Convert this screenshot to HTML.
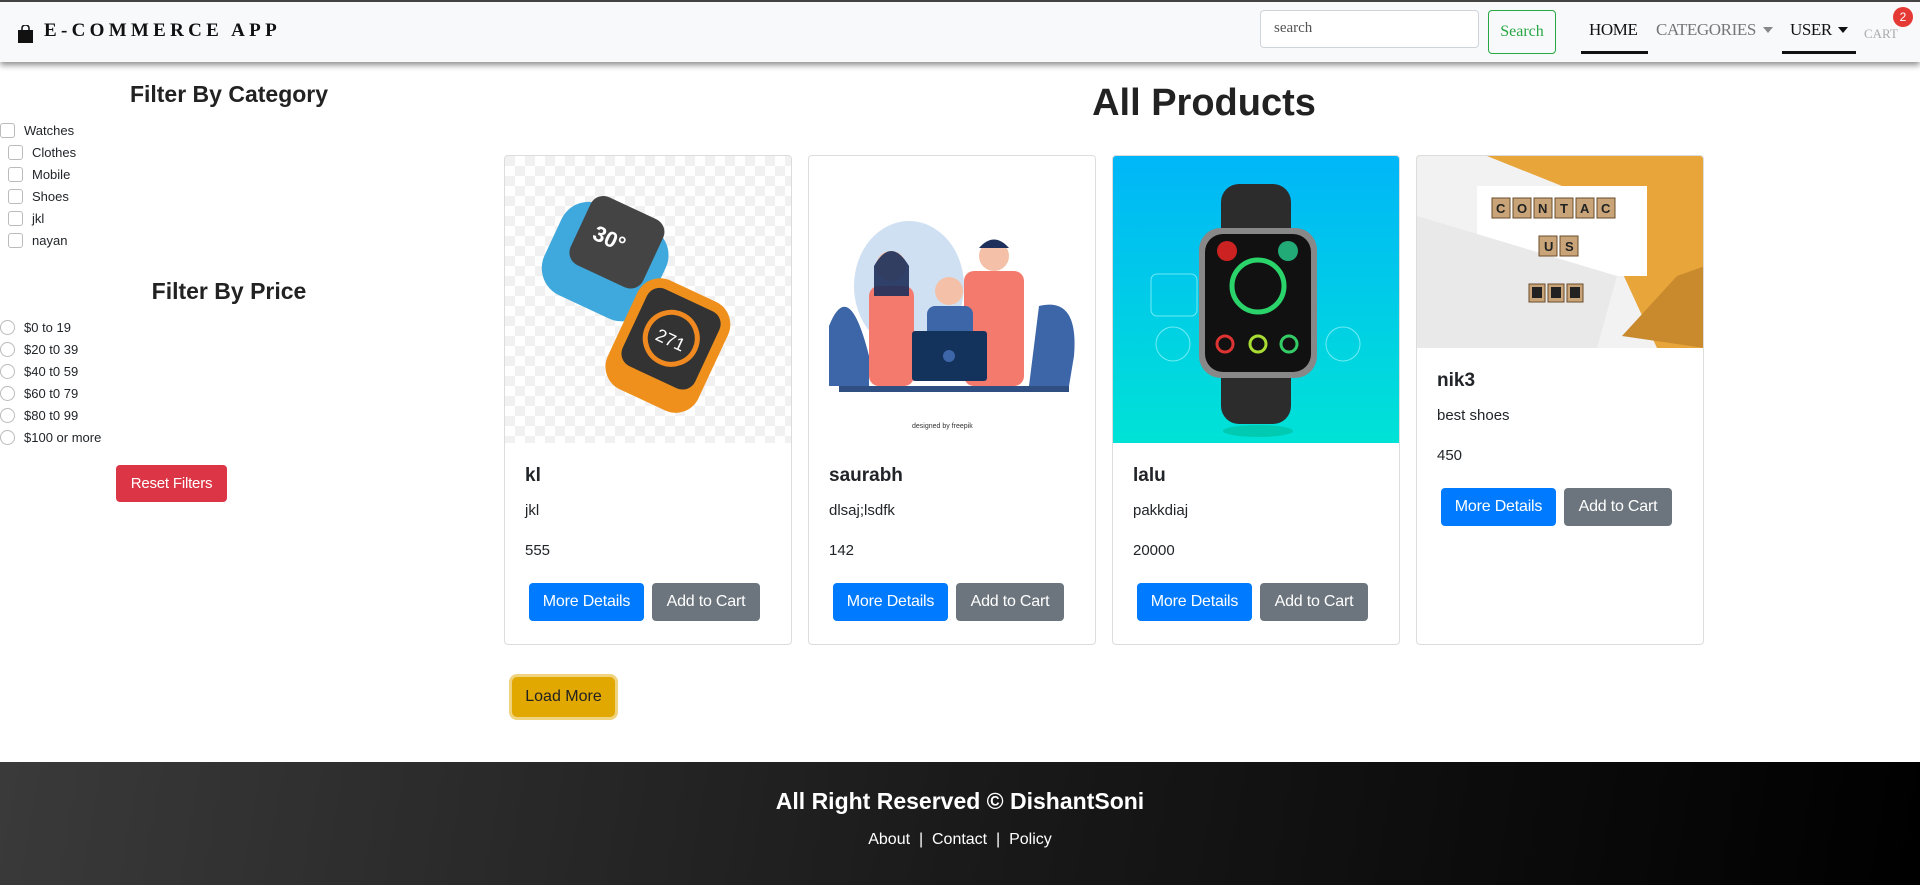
<!DOCTYPE html>
<html><head><meta charset="utf-8"><style>
*{box-sizing:border-box;margin:0;padding:0}
body{width:1920px;height:885px;position:relative;overflow:hidden;background:#fff;font-family:"Liberation Sans",sans-serif;color:#212529}
.a{position:absolute;white-space:nowrap}
.nav{left:0;top:0;width:1920px;height:62px;background:#f8f9fa;border-top:2px solid #444;box-shadow:0 3px 6px rgba(0,0,0,.45)}
.cb{width:15px;height:15px;border:1px solid #bbb;border-radius:3px;background:#fff}
.rb{width:15px;height:15px;border:1px solid #bbb;border-radius:50%;background:#fff}
.lbl{font-size:13px;color:#212529}
.card{border:1px solid #dcdcdc;border-radius:4px;width:288px;overflow:hidden;background:#fff}
.btn{position:absolute;height:38px;border-radius:4px;color:#fff;font-size:16px;letter-spacing:-0.2px;line-height:38px;text-align:center}
.blue{background:#007bff}.gray{background:#6c757d}
.t{font-size:19px;font-weight:bold}
.d{font-size:15px}
.nv{font-family:'Liberation Serif',serif;font-size:17px;letter-spacing:-0.4px}
</style></head><body>
<div class="a nav"></div>
<svg class="a" style="left:18px;top:25px" width="15" height="18" viewBox="0 0 15 18"><rect x="0" y="5" width="15" height="13" fill="#111"/><path d="M4 6V3a3.5 3 0 0 1 7 0v3" stroke="#111" stroke-width="1.5" fill="none"/></svg>
<div class="a" style="left:44px;top:20px;font-family:'Liberation Serif',serif;font-weight:bold;font-size:19px;letter-spacing:4.3px;color:#111">E-COMMERCE APP</div>
<div class="a" style="left:1260px;top:10px;width:219px;height:38px;border:1px solid #ced4da;border-radius:4px;background:#fff;font-family:'Liberation Serif',serif;font-size:15px;color:#555;padding:9px 13px">search</div>
<div class="a" style="left:1488px;top:10px;width:68px;height:44px;border:1px solid #28a745;border-radius:4px;font-family:'Liberation Serif',serif;font-size:16px;color:#28a745;line-height:42px;text-align:center">Search</div>
<div class="a nv" style="left:1589px;top:20px;color:#111">HOME</div>
<div class="a" style="left:1581px;top:51px;width:67px;height:3px;background:#111"></div>
<div class="a nv" style="left:1656px;top:20px;color:#777">CATEGORIES</div>
<div class="a" style="left:1763px;top:27px;width:0;height:0;border-left:5px solid transparent;border-right:5px solid transparent;border-top:6px solid #888"></div>
<div class="a nv" style="left:1790px;top:20px;color:#111">USER</div>
<div class="a" style="left:1838px;top:27px;width:0;height:0;border-left:5px solid transparent;border-right:5px solid transparent;border-top:6px solid #111"></div>
<div class="a" style="left:1782px;top:51px;width:74px;height:3px;background:#111"></div>
<div class="a" style="left:1864px;top:26px;font-family:'Liberation Serif',serif;font-size:13px;color:#aaa">CART</div>
<div class="a" style="left:1893px;top:7px;width:20px;height:20px;border-radius:50%;background:#e53935;color:#fff;font-size:12px;text-align:center;line-height:20px">2</div>

<div class="a" style="left:79px;top:81px;width:300px;text-align:center;font-size:23px;font-weight:bold;color:#222">Filter By Category</div>
<div class="a cb" style="left:0;top:123px"></div><div class="a lbl" style="left:24px;top:123px">Watches</div>
<div class="a cb" style="left:8px;top:145px"></div><div class="a lbl" style="left:32px;top:145px">Clothes</div>
<div class="a cb" style="left:8px;top:167px"></div><div class="a lbl" style="left:32px;top:167px">Mobile</div>
<div class="a cb" style="left:8px;top:189px"></div><div class="a lbl" style="left:32px;top:189px">Shoes</div>
<div class="a cb" style="left:8px;top:211px"></div><div class="a lbl" style="left:32px;top:211px">jkl</div>
<div class="a cb" style="left:8px;top:233px"></div><div class="a lbl" style="left:32px;top:233px">nayan</div>
<div class="a" style="left:79px;top:278px;width:300px;text-align:center;font-size:23px;font-weight:bold;color:#222">Filter By Price</div>
<div class="a rb" style="left:0;top:320px"></div><div class="a lbl" style="left:24px;top:320px">$0 to 19</div>
<div class="a rb" style="left:0;top:342px"></div><div class="a lbl" style="left:24px;top:342px">$20 t0 39</div>
<div class="a rb" style="left:0;top:364px"></div><div class="a lbl" style="left:24px;top:364px">$40 t0 59</div>
<div class="a rb" style="left:0;top:386px"></div><div class="a lbl" style="left:24px;top:386px">$60 t0 79</div>
<div class="a rb" style="left:0;top:408px"></div><div class="a lbl" style="left:24px;top:408px">$80 t0 99</div>
<div class="a rb" style="left:0;top:430px"></div><div class="a lbl" style="left:24px;top:430px">$100 or more</div>
<div class="btn a" style="left:116px;top:465px;width:111px;height:37px;line-height:37px;background:#dc3545;font-size:15px">Reset Filters</div>

<div class="a" style="left:904px;top:82px;width:600px;text-align:center;font-size:38px;font-weight:bold;color:#222">All Products</div>

<!-- card 1 -->
<div class="a card" style="left:504px;top:155px;height:490px">
<svg width="288" height="287" viewBox="0 0 288 287"><defs><pattern id="ck" width="20" height="20" patternUnits="userSpaceOnUse"><rect width="20" height="20" fill="#fff"/><rect width="10" height="10" fill="#f1f1f1"/><rect x="10" y="10" width="10" height="10" fill="#f1f1f1"/></pattern></defs><rect width="288" height="287" fill="url(#ck)"/>
<g transform="rotate(25 100 100)"><rect x="45" y="55" width="115" height="100" rx="30" fill="#3fa8dc"/><rect x="65" y="45" width="80" height="75" rx="14" fill="#444"/><text x="80" y="90" fill="#fff" font-size="22" font-weight="bold" font-family="Liberation Sans">30°</text></g>
<g transform="rotate(25 165 185)"><rect x="115" y="130" width="100" height="120" rx="25" fill="#f0901c"/><rect x="125" y="140" width="80" height="85" rx="14" fill="#333"/><circle cx="165" cy="182" r="26" fill="none" stroke="#f08a20" stroke-width="5"/><text x="150" y="190" fill="#fff" font-size="18" font-family="Liberation Sans">271</text></g></svg>
<div class="a t" style="left:20px;top:309px">kl</div>
<div class="a d" style="left:20px;top:346px">jkl</div>
<div class="a d" style="left:20px;top:386px">555</div>
<div class="btn blue" style="left:24px;top:427px;width:115px">More Details</div>
<div class="btn gray" style="left:147px;top:427px;width:108px">Add to Cart</div>
</div>

<!-- card 2 -->
<div class="a card" style="left:808px;top:155px;height:490px">
<svg width="288" height="287" viewBox="0 0 288 287"><rect width="288" height="287" fill="#fff"/>
<ellipse cx="100" cy="130" rx="55" ry="65" fill="#cfe0f3"/><path d="M20 170 Q40 120 60 200 L60 230 H20Z" fill="#3c66a8"/><path d="M230 150 Q270 140 265 200 L260 230 H220Z" fill="#3c66a8"/>
<rect x="60" y="130" width="45" height="100" rx="10" fill="#f47a6e"/><circle cx="82" cy="110" r="15" fill="#f4c1a8"/><path d="M65 110 Q82 80 100 110 L100 140 H65Z" fill="#1d2f5a" opacity=".9"/>
<rect x="155" y="115" width="60" height="115" rx="10" fill="#f47a6e"/><circle cx="185" cy="100" r="15" fill="#f4c1a8"/><path d="M170 92 Q185 75 200 92Z" fill="#1d2f5a"/>
<circle cx="140" cy="135" r="14" fill="#f4c1a8"/><rect x="118" y="150" width="46" height="40" rx="8" fill="#3c66a8"/>
<rect x="103" y="175" width="75" height="50" rx="3" fill="#13325c"/><circle cx="140" cy="200" r="6" fill="#3c66a8"/>
<rect x="30" y="230" width="230" height="6" fill="#2f4f83"/>
<text x="103" y="272" font-size="7" fill="#333" font-family="Liberation Sans">designed by freepik</text></svg>
<div class="a t" style="left:20px;top:309px">saurabh</div>
<div class="a d" style="left:20px;top:346px">dlsaj;lsdfk</div>
<div class="a d" style="left:20px;top:386px">142</div>
<div class="btn blue" style="left:24px;top:427px;width:115px">More Details</div>
<div class="btn gray" style="left:147px;top:427px;width:108px">Add to Cart</div>
</div>

<!-- card 3 -->
<div class="a card" style="left:1112px;top:155px;height:490px">
<svg width="288" height="287" viewBox="0 0 288 287"><defs><linearGradient id="g3" x1="0" y1="0" x2="0" y2="1"><stop offset="0" stop-color="#00b6f8"/><stop offset="1" stop-color="#00e2d6"/></linearGradient></defs><rect width="288" height="287" fill="url(#g3)"/>
<rect x="108" y="28" width="70" height="240" rx="18" fill="#2c2c2c"/><rect x="86" y="72" width="118" height="150" rx="22" fill="#888"/><rect x="92" y="78" width="106" height="138" rx="18" fill="#111"/>
<circle cx="145" cy="130" r="26" fill="none" stroke="#2ad46b" stroke-width="5"/><circle cx="114" cy="95" r="10" fill="#c22"/><circle cx="175" cy="95" r="10" fill="#2a7"/>
<circle cx="112" cy="188" r="8" fill="none" stroke="#d33" stroke-width="3"/><circle cx="145" cy="188" r="8" fill="none" stroke="#ad3" stroke-width="3"/><circle cx="176" cy="188" r="8" fill="none" stroke="#3c6" stroke-width="3"/>
<rect x="38" y="118" width="46" height="42" rx="6" fill="none" stroke="#bff" opacity=".6"/><circle cx="60" cy="188" r="17" fill="none" stroke="#bff" opacity=".6"/><circle cx="230" cy="188" r="17" fill="none" stroke="#bff" opacity=".6"/><ellipse cx="145" cy="275" rx="35" ry="6" fill="#0a7" opacity=".4"/></svg>
<div class="a t" style="left:20px;top:309px">lalu</div>
<div class="a d" style="left:20px;top:346px">pakkdiaj</div>
<div class="a d" style="left:20px;top:386px">20000</div>
<div class="btn blue" style="left:24px;top:427px;width:115px">More Details</div>
<div class="btn gray" style="left:147px;top:427px;width:108px">Add to Cart</div>
</div>

<!-- card 4 -->
<div class="a card" style="left:1416px;top:155px;height:490px">
<svg width="288" height="192" viewBox="0 0 288 192"><rect width="288" height="192" fill="#e8a53a"/><path d="M0 0 H70 L170 40 L240 192 H0Z" fill="#f2f2f2"/><path d="M60 30 H230 V120 H60Z" fill="#fff"/><path d="M0 60 L200 120 L180 192 H0Z" fill="#e9e9e9"/><path d="M205 180 L260 120 L288 110 V192Z" fill="#c98a2e"/>
<g fill="#c8a478" stroke="#6b4b2a" stroke-width="1"><rect x="75" y="42" width="18" height="20"/><rect x="96" y="42" width="18" height="20"/><rect x="117" y="42" width="18" height="20"/><rect x="138" y="42" width="18" height="20"/><rect x="159" y="42" width="18" height="20"/><rect x="180" y="42" width="18" height="20"/><rect x="122" y="80" width="18" height="20"/><rect x="143" y="80" width="18" height="20"/><rect x="112" y="128" width="16" height="18"/><rect x="131" y="128" width="16" height="18"/><rect x="150" y="128" width="16" height="18"/></g>
<g font-family="Liberation Sans" font-size="13" font-weight="bold" fill="#222"><text x="79" y="57">C</text><text x="100" y="57">O</text><text x="121" y="57">N</text><text x="143" y="57">T</text><text x="163" y="57">A</text><text x="184" y="57">C</text><text x="127" y="95">U</text><text x="148" y="95">S</text></g>
<g fill="#222"><rect x="115" y="131" width="10" height="11"/><rect x="134" y="131" width="10" height="11"/><rect x="153" y="131" width="10" height="11"/></g></svg>
<div class="a t" style="left:20px;top:214px">nik3</div>
<div class="a d" style="left:20px;top:251px">best shoes</div>
<div class="a d" style="left:20px;top:291px">450</div>
<div class="btn blue" style="left:24px;top:332px;width:115px">More Details</div>
<div class="btn gray" style="left:147px;top:332px;width:108px">Add to Cart</div>
</div>

<div class="a" style="left:512px;top:677px;width:103px;height:40px;border-radius:5px;background:#e0a800;box-shadow:0 0 0 3px #f0d37f;color:#222;font-size:16px;line-height:40px;text-align:center">Load More</div>

<div class="a" style="left:0;top:762px;width:1920px;height:123px;background:linear-gradient(100deg,#3a3a3a,#1a1a1a 50%,#000)"></div>
<div class="a" style="left:0;top:788px;width:1920px;text-align:center;color:#fff;font-size:23px;font-weight:bold">All Right Reserved © DishantSoni</div>
<div class="a" style="left:0;top:831px;width:1920px;text-align:center;color:#fff;font-size:16px">About &nbsp;|&nbsp; Contact &nbsp;|&nbsp; Policy</div>
</body></html>
